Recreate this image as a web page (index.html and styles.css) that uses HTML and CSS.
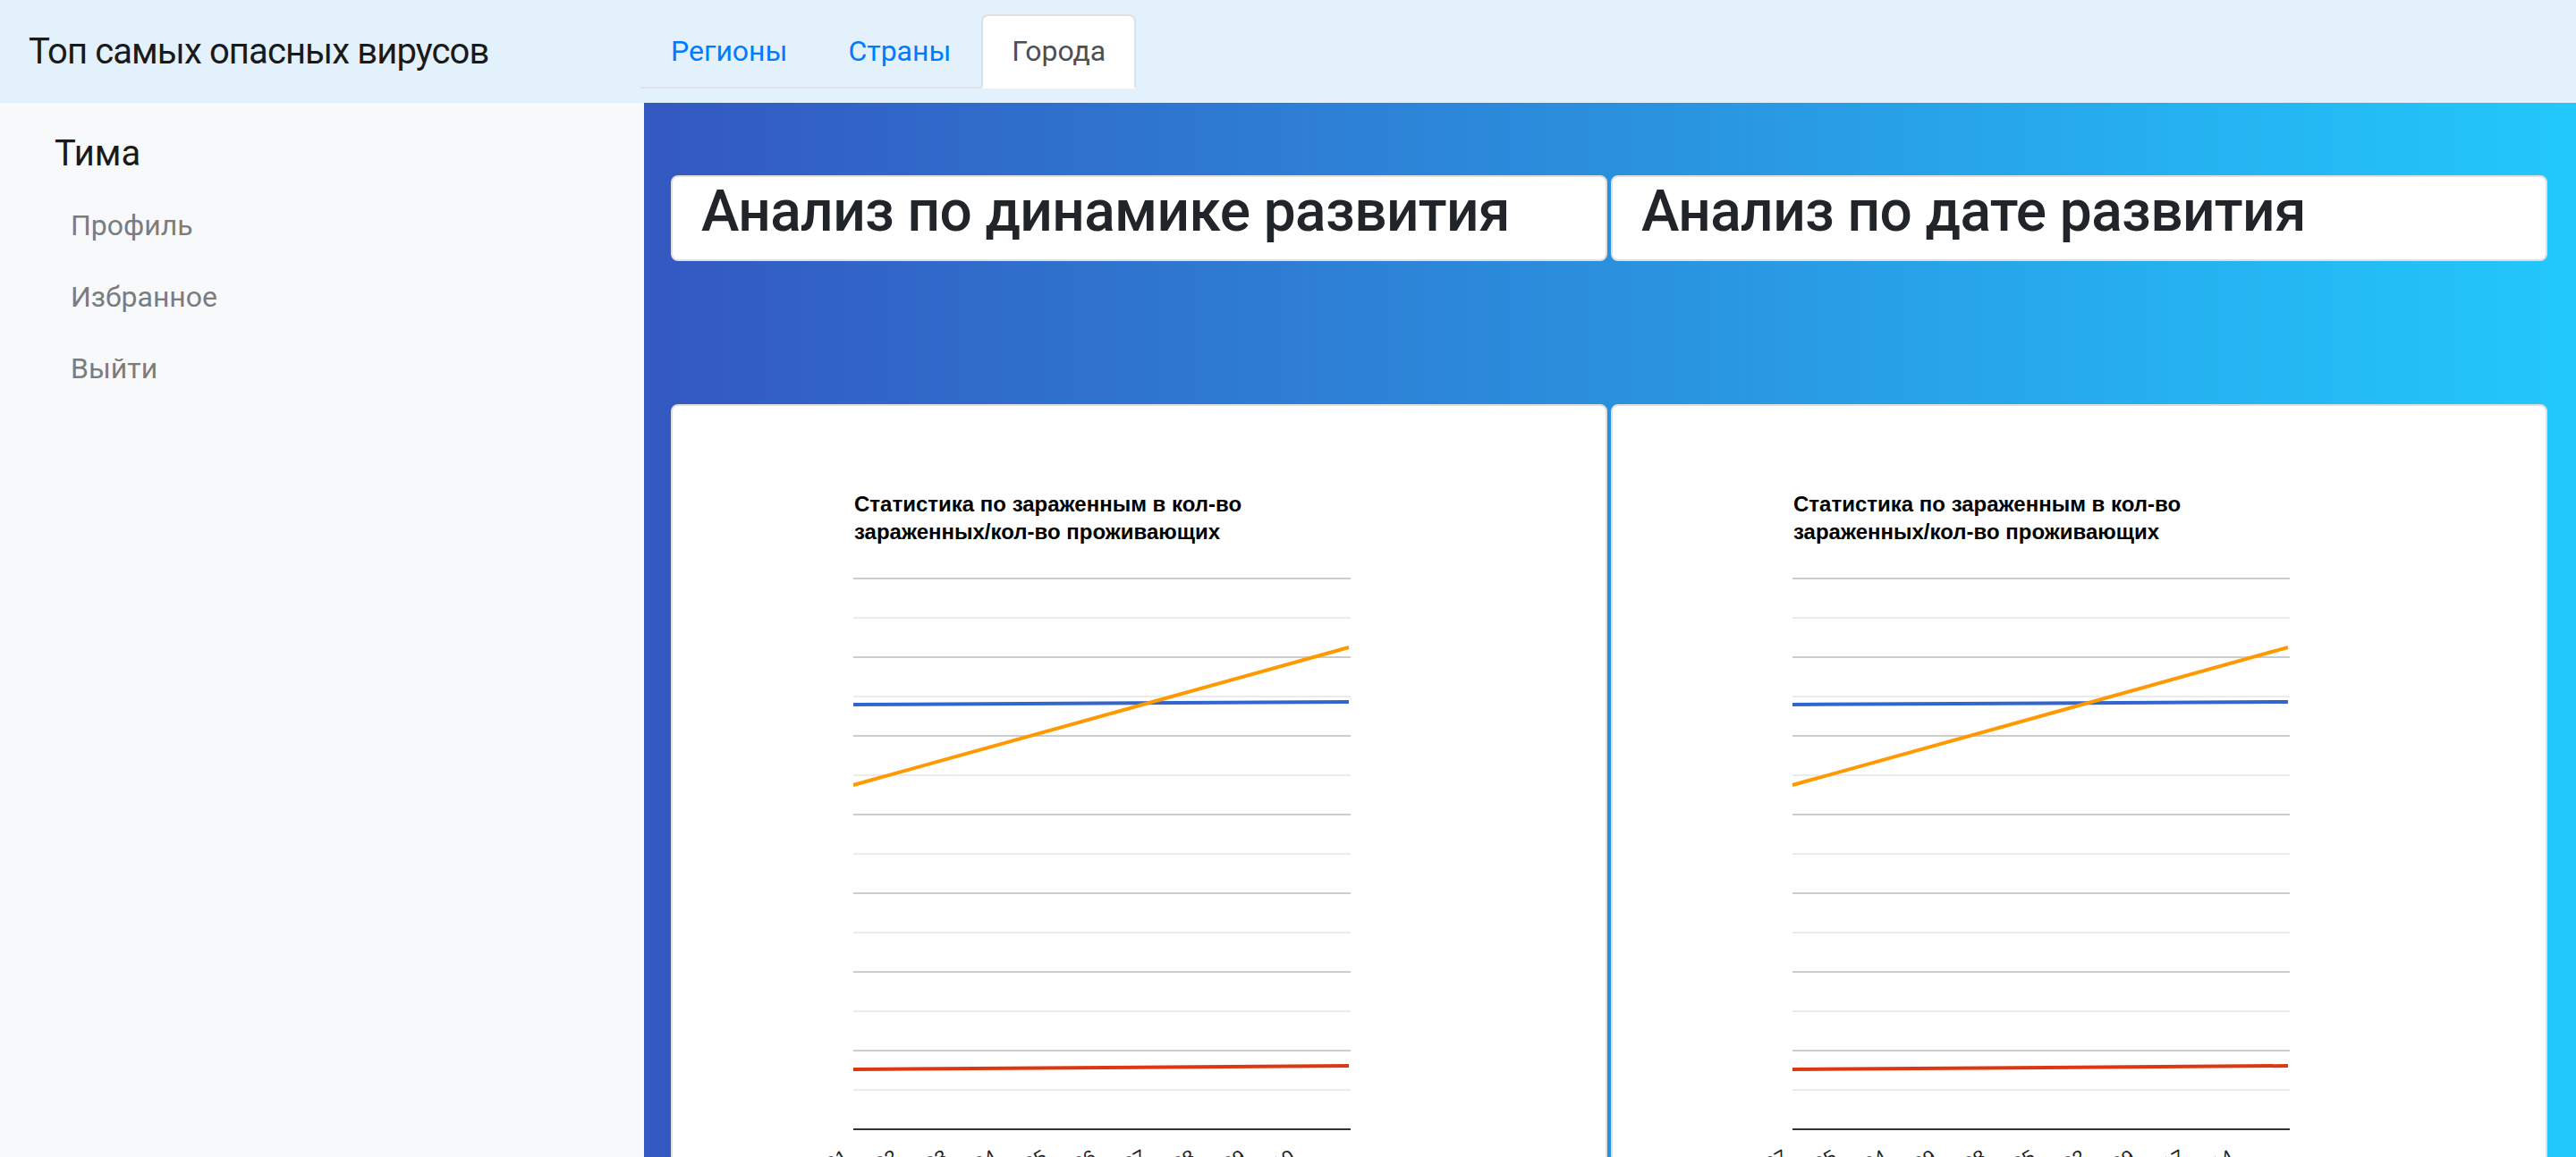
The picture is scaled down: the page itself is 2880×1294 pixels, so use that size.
FILE: index.html
```html
<!DOCTYPE html>
<html lang="ru">
<head>
<meta charset="utf-8">
<title>Топ самых опасных вирусов</title>
<link rel="stylesheet" href="styles.css">
</head>
<body>
<header class="topbar">
  <div class="brand">Топ самых опасных вирусов</div>
  <ul class="tabs">
    <li><a class="tab" href="#">Регионы</a></li>
    <li><a class="tab" href="#">Страны</a></li>
    <li><a class="tab active" href="#">Города</a></li>
  </ul>
</header>
<div class="layout">
  <aside class="sidebar">
    <div class="user">Тима</div>
    <nav class="side-nav">
      <a class="side-link" href="#">Профиль</a>
      <a class="side-link" href="#">Избранное</a>
      <a class="side-link" href="#">Выйти</a>
    </nav>
  </aside>
  <main class="main">
    <div class="row">
      <div class="card title-card"><h2>Анализ по динамике развития</h2></div>
      <div class="card title-card"><h2>Анализ по дате развития</h2></div>
    </div>
    <div class="row charts">
      <div class="card chart-card">
        <svg class="chart" width="1043" height="900" viewBox="0 0 1043 900">
          <text class="ctitle" x="203" y="118">Статистика по зараженным в кол-во</text>
          <text class="ctitle" x="203" y="149">зараженных/кол-во проживающих</text>
          <g class="grid-major">
            <line x1="202" x2="758" y1="193" y2="193"/><line x1="202" x2="758" y1="281" y2="281"/>
            <line x1="202" x2="758" y1="369" y2="369"/><line x1="202" x2="758" y1="457" y2="457"/>
            <line x1="202" x2="758" y1="545" y2="545"/><line x1="202" x2="758" y1="633" y2="633"/>
            <line x1="202" x2="758" y1="721" y2="721"/>
          </g>
          <g class="grid-minor">
            <line x1="202" x2="758" y1="237" y2="237"/><line x1="202" x2="758" y1="325" y2="325"/>
            <line x1="202" x2="758" y1="413" y2="413"/><line x1="202" x2="758" y1="501" y2="501"/>
            <line x1="202" x2="758" y1="589" y2="589"/><line x1="202" x2="758" y1="677" y2="677"/>
            <line x1="202" x2="758" y1="765" y2="765"/>
          </g>
          <line class="baseline" x1="202" x2="758" y1="809" y2="809"/>
          <polyline class="s-blue" points="202,334 756,331"/>
          <polyline class="s-red" points="202,742 756,738"/>
          <polyline class="s-orange" points="202,424 756,270"/>
          <g class="xlabels">
            <text x="198" y="844" transform="rotate(-30 198 844)">2020-03-01</text>
            <text x="253" y="844" transform="rotate(-30 253 844)">2020-03-02</text>
            <text x="309" y="844" transform="rotate(-30 309 844)">2020-03-03</text>
            <text x="364" y="844" transform="rotate(-30 364 844)">2020-03-04</text>
            <text x="420" y="844" transform="rotate(-30 420 844)">2020-03-05</text>
            <text x="475" y="844" transform="rotate(-30 475 844)">2020-03-06</text>
            <text x="531" y="844" transform="rotate(-30 531 844)">2020-03-07</text>
            <text x="586" y="844" transform="rotate(-30 586 844)">2020-03-08</text>
            <text x="642" y="844" transform="rotate(-30 642 844)">2020-03-09</text>
            <text x="697" y="844" transform="rotate(-30 697 844)">2020-03-10</text>
          </g>
        </svg>
      </div>
      <div class="card chart-card">
        <svg class="chart" width="1043" height="900" viewBox="0 0 1043 900">
          <text class="ctitle" x="202" y="118">Статистика по зараженным в кол-во</text>
          <text class="ctitle" x="202" y="149">зараженных/кол-во проживающих</text>
          <g class="grid-major">
            <line x1="201" x2="757" y1="193" y2="193"/><line x1="201" x2="757" y1="281" y2="281"/>
            <line x1="201" x2="757" y1="369" y2="369"/><line x1="201" x2="757" y1="457" y2="457"/>
            <line x1="201" x2="757" y1="545" y2="545"/><line x1="201" x2="757" y1="633" y2="633"/>
            <line x1="201" x2="757" y1="721" y2="721"/>
          </g>
          <g class="grid-minor">
            <line x1="201" x2="757" y1="237" y2="237"/><line x1="201" x2="757" y1="325" y2="325"/>
            <line x1="201" x2="757" y1="413" y2="413"/><line x1="201" x2="757" y1="501" y2="501"/>
            <line x1="201" x2="757" y1="589" y2="589"/><line x1="201" x2="757" y1="677" y2="677"/>
            <line x1="201" x2="757" y1="765" y2="765"/>
          </g>
          <line class="baseline" x1="201" x2="757" y1="809" y2="809"/>
          <polyline class="s-blue" points="201,334 755,331"/>
          <polyline class="s-red" points="201,742 755,738"/>
          <polyline class="s-orange" points="201,424 755,270"/>
          <g class="xlabels">
            <text x="197" y="844" transform="rotate(-30 197 844)">2020-02-07</text>
            <text x="252" y="844" transform="rotate(-30 252 844)">2020-03-05</text>
            <text x="308" y="844" transform="rotate(-30 308 844)">2020-01-04</text>
            <text x="363" y="844" transform="rotate(-30 363 844)">2020-04-09</text>
            <text x="419" y="844" transform="rotate(-30 419 844)">2020-02-08</text>
            <text x="474" y="844" transform="rotate(-30 474 844)">2020-04-05</text>
            <text x="530" y="844" transform="rotate(-30 530 844)">2020-01-02</text>
            <text x="585" y="844" transform="rotate(-30 585 844)">2020-03-09</text>
            <text x="641" y="844" transform="rotate(-30 641 844)">2020-02-17</text>
            <text x="696" y="844" transform="rotate(-30 696 844)">2020-04-14</text>
          </g>
        </svg>
      </div>
    </div>
  </main>
</div>
</body>
</html>
```

FILE: styles.css
```css
* { box-sizing: border-box; }
html, body { margin: 0; }
body {
  width: 2880px;
  height: 1294px;
  overflow: hidden;
  font-family: Roboto, Inter, "Noto Sans", sans-serif;
  background: #f8f9fa;
}

.topbar {
  display: flex;
  align-items: flex-start;
  height: 115px;
  padding: 16px 0 0 32px;
  background: #e3f1fc;
}
.brand {
  flex: 0 0 684px;
  font-size: 40px;
  line-height: 83px;
  letter-spacing: -0.9px;
  color: #1a1a1a;
}
.tabs {
  display: flex;
  list-style: none;
  margin: 0;
  padding: 0;
  border-bottom: 2px solid #dee2e6;
}
.tab {
  display: block;
  padding: 16px 32px;
  margin-bottom: -2px;
  border: 2px solid transparent;
  border-radius: 8px 8px 0 0;
  font-size: 32px;
  line-height: 47px;
  color: #007bff;
  text-decoration: none;
}
.tab.active {
  background: #fff;
  border-color: #dee2e6 #dee2e6 #fff;
  color: #495057;
}

.layout {
  display: flex;
  height: 1179px;
}
.sidebar {
  flex: 0 0 720px;
  background: #f8f9fa;
  padding: 33px 0 0 61px;
}
.user {
  font-size: 40px;
  line-height: 48px;
  color: #1a1a1a;
}
.side-nav {
  display: flex;
  flex-direction: column;
  margin-top: 16px;
}
.side-link {
  padding: 16px 18px;
  font-size: 32px;
  line-height: 48px;
  color: #7c7c7d;
  text-decoration: none;
}

.main {
  flex: 1;
  overflow: hidden;
  padding: 81px 32px 0 30px;
  background: linear-gradient(90deg, #3358c0, #22c8fc);
}
.row {
  display: grid;
  grid-template-columns: 1fr 1fr;
  gap: 4px;
}
.card {
  background: #fff;
  border: 2px solid #dfdfdf;
  border-radius: 8px;
}
.title-card h2 {
  margin: 0;
  padding: 0 32px 15px;
  font-size: 64px;
  font-weight: 500;
  line-height: 77px;
  letter-spacing: -0.6px;
  color: #212529;
}
.charts { margin-top: 160px; }
.chart-card {
  height: 1000px;
  overflow: hidden;
}
.chart { display: block; }
.ctitle {
  font-family: "Liberation Sans", Arial, sans-serif;
  font-weight: bold;
  font-size: 24px;
  fill: #000;
}
.grid-major line { stroke: #cccccc; stroke-width: 2; }
.grid-minor line { stroke: #ebebeb; stroke-width: 2; }
.baseline { stroke: #333333; stroke-width: 2; }
.s-blue, .s-red, .s-orange { fill: none; stroke-width: 4; }
.s-blue { stroke: #3366cc; }
.s-red { stroke: #dc3912; }
.s-orange { stroke: #ff9900; }
.xlabels text {
  font-family: "Liberation Sans", Arial, sans-serif;
  font-size: 22px;
  fill: #222222;
  text-anchor: end;
}
```
